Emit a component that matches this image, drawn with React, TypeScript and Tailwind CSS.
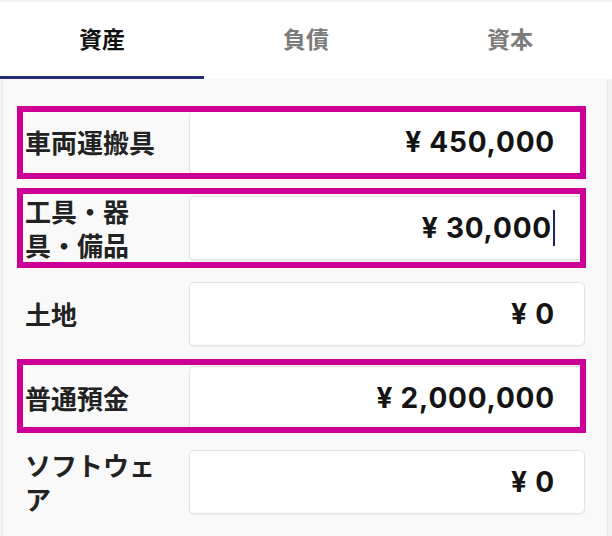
import { useState } from 'react';

type Tab = { key: string; label: string };
const TABS: Tab[] = [
  { key: 'assets', label: '資産' },
  { key: 'liabilities', label: '負債' },
  { key: 'equity', label: '資本' },
];

type Row = {
  label: string;
  value: string;
  marked?: 'a' | 'b' | 'c';
  caret?: boolean;
  tall?: boolean;
};

const ROWS: Row[] = [
  { label: '車両運搬具', value: '¥ 450,000', marked: 'a' },
  { label: '工具・器具・備品', value: '¥ 30,000', marked: 'b', caret: true, tall: true },
  { label: '土地', value: '¥ 0' },
  { label: '普通預金', value: '¥ 2,000,000', marked: 'c' },
  { label: 'ソフトウェア', value: '¥ 0' },
];

// highlight frames sit slightly off each row, so each one gets its own inset
const MARK_CLASS: Record<string, string> = {
  a: 'absolute -left-[8px] -right-[1px] -top-[4px] -bottom-[5px]',
  b: 'absolute -left-[8px] -right-[1px] -top-[6px] -bottom-[6px]',
  c: 'absolute -left-[8px] -right-[1px] -top-[7px] -bottom-[3px]',
};

const labelFont = { fontFamily: '"Noto Sans CJK JP", "Noto Sans", sans-serif' };
const numFont = { fontFamily: 'Inter, "Noto Sans CJK JP", sans-serif' };

const AssetRow = ({ row }: { row: Row }) => (
  <div className={`relative flex items-center ${row.tall ? 'h-[68px]' : 'h-[64px]'}`}>
    <div
      className="w-[140px] mr-[24px] text-[26px] leading-[34px] font-semibold text-[#222]"
      style={labelFont}
    >
      {row.label}
    </div>
    <div className="flex-1 h-[64px] bg-white border border-[#e2e2e2] rounded-[5px] shadow-[0_1px_2px_rgba(0,0,0,0.06)] flex items-center justify-end pr-[29px]">
      <span className="text-[28px] font-bold text-[#141414] tracking-[0.8px]" style={numFont}>
        {row.value}
      </span>
      {row.caret && <span className="ml-[1px] w-[2px] h-[36px] bg-[#1c2470]" />}
    </div>
    {row.marked && (
      <span className={`${MARK_CLASS[row.marked]} border-[6px] border-[#cc0096] pointer-events-none`} />
    )}
  </div>
);

export default function App() {
  const [active, setActive] = useState('assets');

  return (
    <div className="w-[612px] h-[536px] overflow-hidden bg-[#f3f3f3] pt-[2px]">
      {/* tab bar */}
      <div className="flex h-[77px] bg-white">
        {TABS.map((t) => (
          <button
            key={t.key}
            onClick={() => setActive(t.key)}
            className={`flex-1 flex items-center justify-center border-b-[3px] text-[23px] ${
              active === t.key
                ? 'border-[#232d78] text-[#111] font-bold'
                : 'border-transparent text-[#7b7b7b] font-bold'
            }`}
            style={labelFont}
          >
            <span className="-mt-[1px]">{t.label}</span>
          </button>
        ))}
      </div>

      {/* asset inputs */}
      <div className="ml-[2px] mr-[4px] h-full bg-[#f9f9f9] border-x border-[#e6e6e6] pl-[22px] pr-[22px] pt-[31px] flex flex-col gap-[20px]">
        {ROWS.map((r) => (
          <AssetRow key={r.label} row={r} />
        ))}
      </div>
    </div>
  );
}
